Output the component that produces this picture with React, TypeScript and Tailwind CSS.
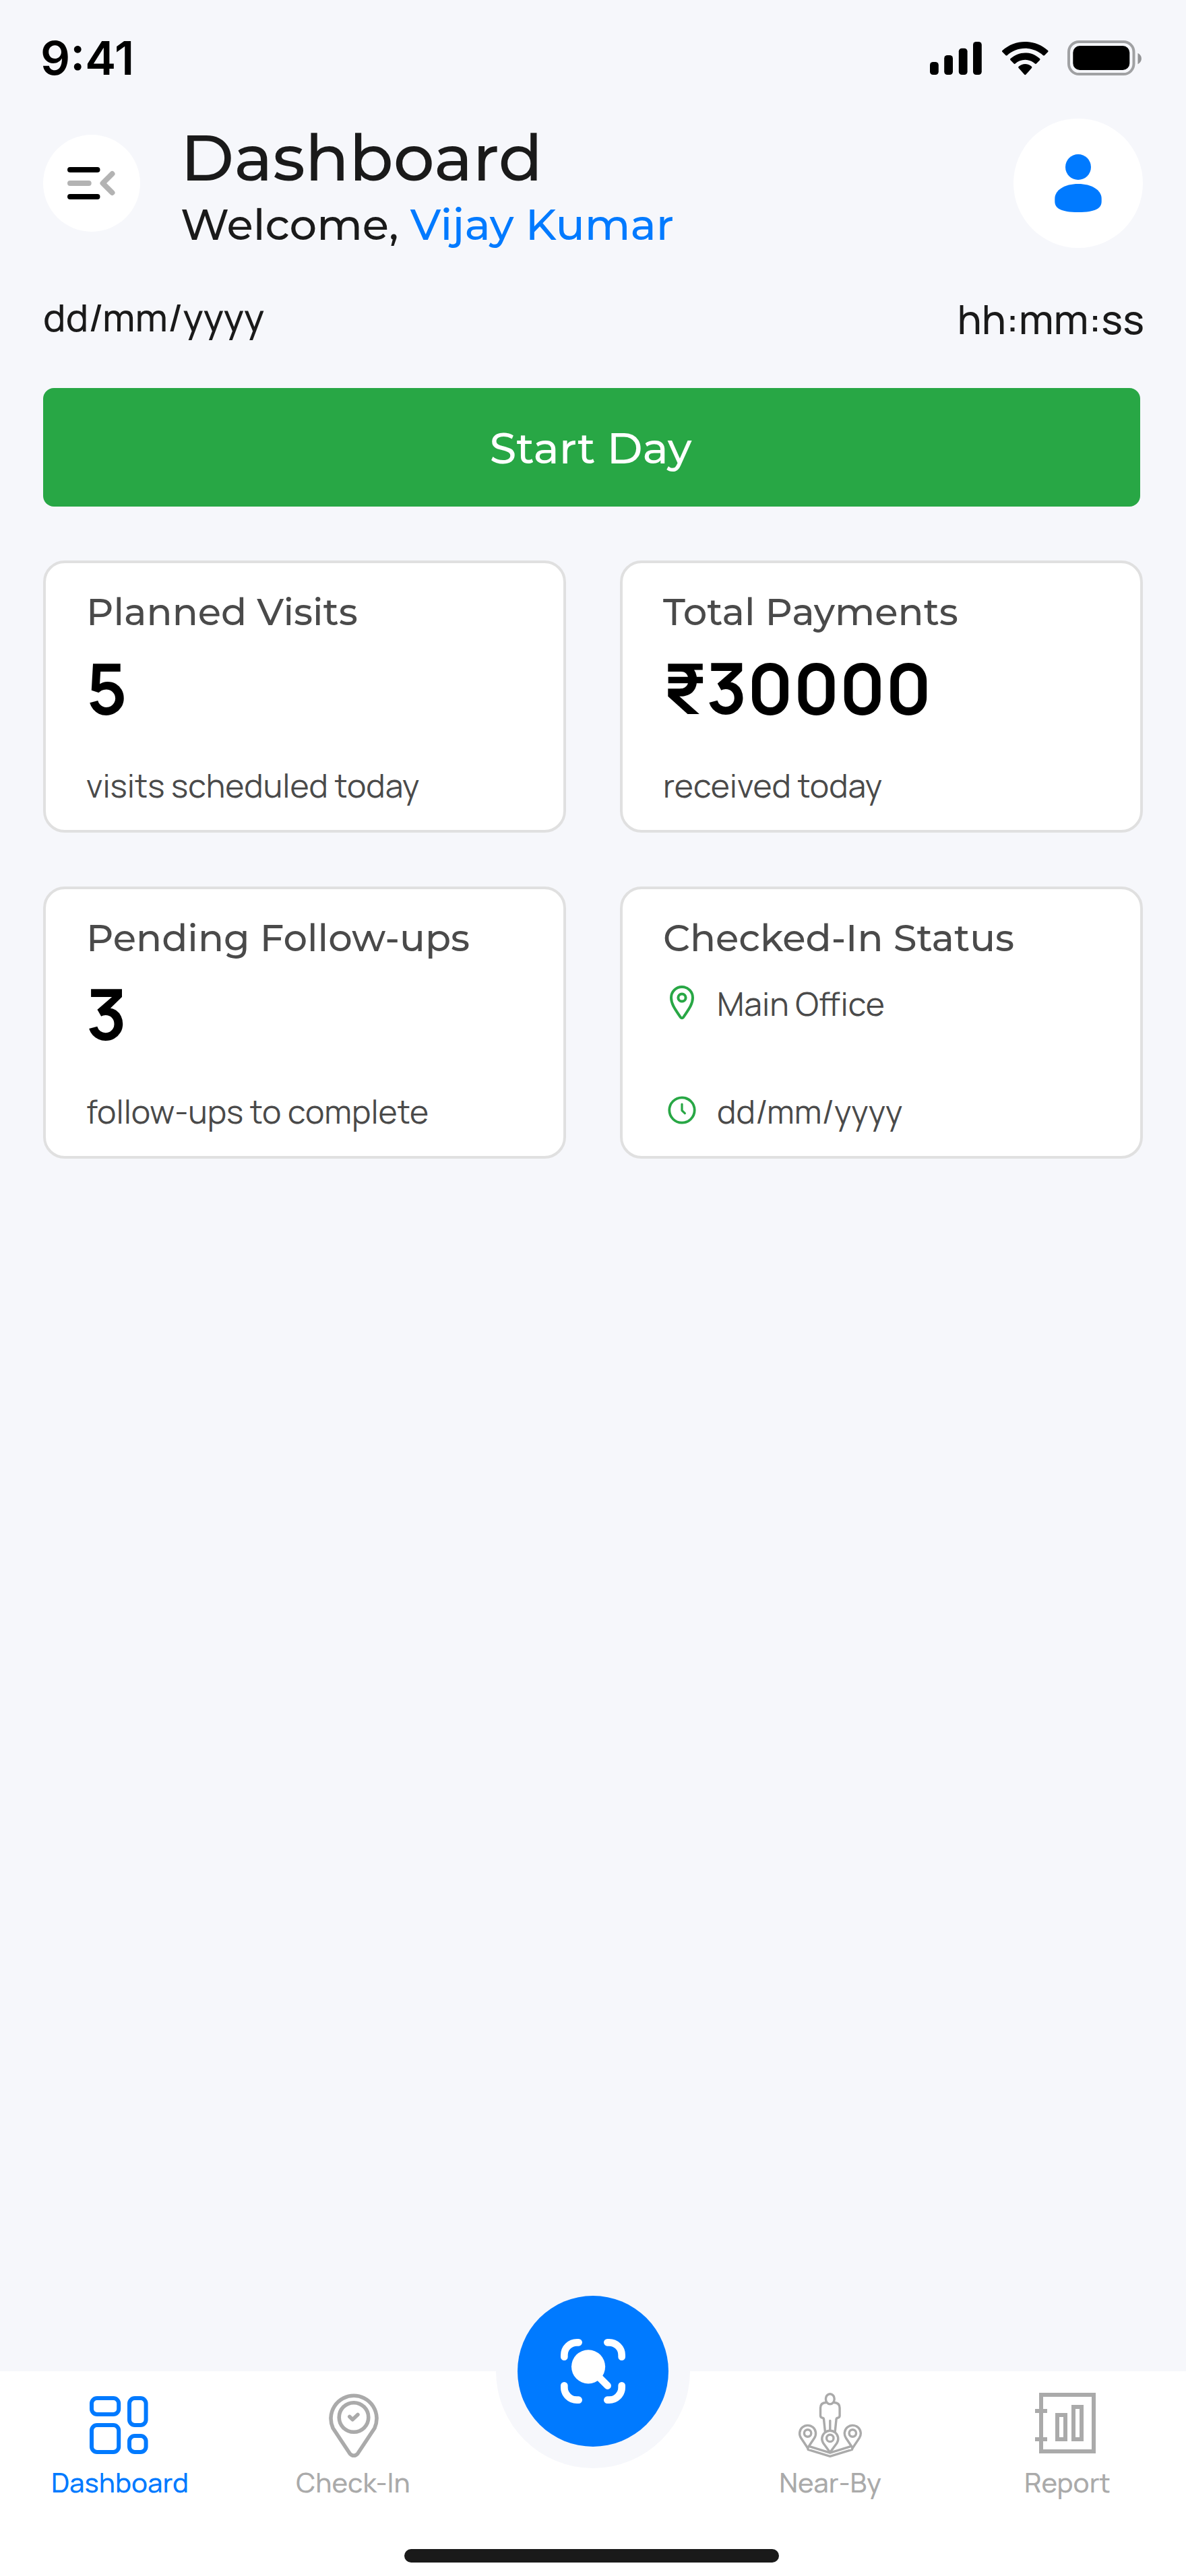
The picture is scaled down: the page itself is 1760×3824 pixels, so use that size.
import React, { type ReactNode } from "react";

function SignalIcon() {
  return (
    <svg className="h-[50px] w-[78px]" viewBox="0 0 78 50" fill="#000">
      <rect x="0" y="30" width="12.8" height="19" rx="4.6" />
      <rect x="21.2" y="20" width="12.8" height="29" rx="4.6" />
      <rect x="42.8" y="9.7" width="12.8" height="39.3" rx="4.6" />
      <rect x="64" y="0" width="12.8" height="49" rx="4.6" />
    </svg>
  );
}

function WifiIcon() {
  return (
    <svg className="h-[50px] w-[69px]" viewBox="0 0 17.25 12.5" fill="#000">
      <path d="M8.5713 2.46628C11.0584 2.46639 13.4504 3.38847 15.2529 5.04195C15.3887 5.1696 15.6056 5.16799 15.7393 5.03834L17.0368 3.77487C17.1045 3.70911 17.1422 3.62004 17.1417 3.52735C17.1411 3.43467 17.1023 3.34603 17.0338 3.28104C12.3028 -1.09368 4.83907 -1.09368 0.108056 3.28104C0.0395 3.34598 0.0006 3.4346 0 3.52728C-0.0006 3.61996 0.037 3.70906 0.1047 3.77487L1.40255 5.03834C1.53615 5.16819 1.75327 5.1698 1.88893 5.04195C3.69167 3.38836 6.08395 2.46628 8.5713 2.46628Z" />
      <path d="M8.56795 6.68656C9.92527 6.68647 11.2341 7.19821 12.2403 8.12234C12.3763 8.25334 12.5907 8.2505 12.7234 8.11594L14.0106 6.79663C14.0784 6.72742 14.116 6.63355 14.115 6.536C14.114 6.43844 14.0746 6.34536 14.0054 6.27757C10.9416 3.38672 6.19688 3.38672 3.13305 6.27757C3.06384 6.34536 3.02435 6.43849 3.02345 6.53607C3.02254 6.63366 3.06028 6.72752 3.12822 6.79663L4.41513 8.11594C4.54778 8.2505 4.76215 8.25334 4.89823 8.12234C5.90368 7.19882 7.21152 6.68713 8.56795 6.68656Z" />
      <path d="M11.0924 9.48011C11.0943 9.58546 11.0572 9.68703 10.9899 9.76084L8.81327 12.2156C8.74946 12.2877 8.66247 12.3283 8.5717 12.3283C8.48094 12.3283 8.39394 12.2877 8.33013 12.2156L6.15314 9.76084C6.08585 9.68697 6.04886 9.58537 6.05089 9.48002C6.05293 9.37467 6.09383 9.27493 6.16393 9.20435C7.55407 7.90005 9.58933 7.90005 10.9795 9.20435C11.0495 9.27499 11.0904 9.37476 11.0924 9.48011Z" />
    </svg>
  );
}

function BatteryIcon() {
  return (
    <svg className="h-[52px] w-[112px]" viewBox="0 0 112 52">
      <rect x="2" y="2" width="96.5" height="48" rx="15.2" fill="none" stroke="#000" strokeOpacity="0.35" strokeWidth="4" />
      <path d="M104.5 19v16.2c3.3-1.4 5.4-4.6 5.4-8.1s-2.1-6.7-5.4-8.1Z" fill="#000" fillOpacity="0.4" />
      <rect x="8.3" y="8" width="84" height="36" rx="10" fill="#000" />
    </svg>
  );
}

function MenuIcon() {
  return (
    <svg className="size-20" viewBox="0 0 80 80" fill="none" strokeWidth="8" strokeLinecap="round" strokeLinejoin="round">
      <path d="M8 20h40.5M8 60h40.5" stroke="#000" />
      <path d="M8 40h27.7M70.5 26 56.5 40l14 14" stroke="#B3B3B3" />
    </svg>
  );
}

function UserIcon() {
  return (
    <svg className="size-24" viewBox="0 0 96 96" fill="#007AFF">
      <circle cx="48" cy="24" r="19" />
      <path d="M13.3 71C13.3 58 28 49 48 49s34.7 9 34.7 22v4C82.7 85 74 91 48 91S13.3 85 13.3 75Z" />
    </svg>
  );
}

function PinIcon() {
  return (
    <svg className="size-14 shrink-0" viewBox="0 0 56 56" fill="none" stroke="#28A745" strokeWidth="4">
      <path d="M12 19a16 16 0 0 1 32 0c0 11-8.5 20.5-13.8 29q-2.2 2.6-4.4 0C20.5 39.5 12 30 12 19Z" />
      <circle cx="28" cy="19" r="5.6" />
    </svg>
  );
}

function ClockIcon() {
  return (
    <svg className="size-14 shrink-0" viewBox="0 0 56 56" fill="none" stroke="#28A745" strokeLinecap="round" strokeLinejoin="round">
      <circle cx="28" cy="26" r="18.7" strokeWidth="3.8" />
      <path d="M28 17v9.500l4.300 4.200" strokeWidth="3.200" />
    </svg>
  );
}

function DashboardIcon() {
  return (
    <svg className="size-24" viewBox="0 0 96 96" fill="none" stroke="currentColor" strokeWidth="6">
      <rect x="8" y="8" width="40.2" height="24" rx="8" />
      <rect x="8" y="48" width="40.2" height="40" rx="8" />
      <rect x="64" y="8" width="24.6" height="40" rx="8" />
      <rect x="64" y="64" width="24.6" height="24" rx="8" />
    </svg>
  );
}

function CheckInIcon() {
  return (
    <svg className="size-24" viewBox="0 0 96 96" fill="none" stroke="currentColor" strokeWidth="5.6" strokeLinecap="round" strokeLinejoin="round">
      <path d="M18.1 52.5A34 34 0 1 1 79.9 52.5L54.5 90.8Q49 96 43.5 90.8Z" />
      <circle cx="49" cy="36.5" r="21.8" />
      <path d="m42.8 35.5 4.4 4.2 7.7-7.2" />
    </svg>
  );
}

function NearByIcon() {
  return (
    <svg className="size-24" viewBox="0 0 96 96" fill="none" stroke="currentColor" strokeWidth="3.4" strokeLinecap="round" strokeLinejoin="round">
      <ellipse cx="47.8" cy="9.3" rx="6.4" ry="7.6" />
      <path d="M42 14.5C36 14.7 33.5 18 33.5 22.5V34c0 2.5 1.5 3 3 3.3 1.8.3 2 1.2 2.1 2.7l1.8 17.5" />
      <path d="M53.6 14.5c6 .2 8.5 3.5 8.5 8V34c0 2.5-1.5 3-3 3.3-1.8.3-2 1.2-2.1 2.7l-1.8 17.5" />
      <path d="M47.8 41.5v14" />
      <path d="M47.8 88.5 37.7 74.8A12 12 0 1 1 57.9 74.8Z" />
      <circle cx="47.8" cy="67.4" r="5.2" />
      <path d="M14.6 82 4.6 67A12 12 0 1 1 24.6 67Z" />
      <circle cx="14.6" cy="60" r="5.2" />
      <path d="M81.3 82 71.3 67A12 12 0 1 1 91.3 67Z" />
      <circle cx="81.3" cy="60" r="5.2" />
      <path d="m18 79.8 29.8 9.4 29.8-9.4M14.3 81l1 3.4 32.5 9.9 32.5-9.9 1-3.4" />
    </svg>
  );
}

function ReportIcon() {
  return (
    <svg className="size-24" viewBox="0 0 96 96" fill="none" stroke="currentColor" strokeWidth="6">
      <path d="M9 3h78v84H9ZM0 27h18M0 69h18M33 33h12v36H33ZM57 21h12v48H57Z" />
    </svg>
  );
}

function ScanIcon() {
  return (
    <svg className="size-24" viewBox="0 0 18 18" fill="none" stroke="#fff" strokeWidth="2" strokeLinecap="round">
      <path d="M1 5V4.5A3.5 3.5 0 0 1 4.5 1H5M13 1h.5A3.5 3.5 0 0 1 17 4.5V5M1 13v.5A3.5 3.5 0 0 0 4.5 17H5M13 17h.5A3.5 3.5 0 0 0 17 13.5V13" />
      <circle cx="7.7" cy="7.75" r="4.7" fill="#fff" stroke="none" />
      <path d="m10 10 3.05 3.05" />
    </svg>
  );
}

function Card({ title, children }: { title: string; children: ReactNode }) {
  return (
    <section className="flex h-[404px] flex-col rounded-[32px] border-4 border-[#E0E0E0] bg-white px-[60px] pt-[38px]">
      <h2 className="font-[Montserrat,Inter,sans-serif] text-[56px] leading-[68px] font-medium whitespace-nowrap text-[#4A4A4A]">
        {title}
      </h2>
      {children}
    </section>
  );
}

function StatCard({ title, value, note }: { title: string; value: string; note: string }) {
  return (
    <Card title={title}>
      <p className="mt-[7px] text-[104px] leading-[142px] font-bold text-black">{value}</p>
      <p className="mt-[42px] text-5xl leading-[66px] text-[#4A4A4A]">{note}</p>
    </Card>
  );
}

function NavItem({ icon, label, active, className = "" }: { icon: ReactNode; label: string; active?: boolean; className?: string }) {
  return (
    <a className={`flex flex-col items-center pt-8 ${active ? "text-[#007AFF]" : "text-[#AAAAAA]"} ${className}`}>
      {icon}
      <span className={`mt-[9px] text-[40px] leading-[55px] font-medium ${active ? "pl-1" : ""}`}>{label}</span>
    </a>
  );
}

export default function App() {
  return (
    <div className="flex h-[3824px] w-[1760px] flex-col bg-[#F6F7FB] font-[Manrope,Inter,sans-serif] text-[#1A1A1A]">
      <div className="flex h-44 items-start justify-between pt-[60px] pr-16 pl-[60px]">
        <span className="mt-[-15px] font-[Inter,sans-serif] text-[69px] leading-[82px] font-semibold text-black">9:41</span>
        <div className="flex items-start">
          <div className="mt-0.5 mr-[29px]"><SignalIcon /></div>
          <div className="mt-0.5 mr-[28px]"><WifiIcon /></div>
          <BatteryIcon />
        </div>
      </div>

      <header className="flex h-48 items-center px-16">
        <button className="flex size-36 items-center justify-center rounded-full bg-white">
          <MenuIcon />
        </button>
        <div className="mt-[3px] ml-[60px] flex flex-col gap-0.5 font-[Montserrat,Inter,sans-serif] font-medium whitespace-nowrap">
          <h1 className="text-8xl leading-[117px]">Dashboard</h1>
          <p className="text-[64px] leading-[78px]">
            Welcome, <span className="text-[#007AFF]">Vijay Kumar</span>
          </p>
        </div>
        <div className="ml-auto flex size-48 items-center justify-center rounded-full bg-white">
          <UserIcon />
        </div>
      </header>

      <main className="flex flex-1 flex-col px-16 pt-16">
        <div className="-mr-0.5 flex items-start justify-between font-medium">
          <span className="text-[56px] leading-[77px]">dd/mm/yyyy</span>
          <span className="text-[60px] leading-[82px]">hh:mm:ss</span>
        </div>
        <button className="mt-[62px] flex h-44 w-[1628px] items-center justify-center rounded-2xl bg-[#28A745] pt-0.5 pr-[3px] font-[Montserrat,Inter,sans-serif] text-[64px] leading-[80px] font-medium text-white">
          Start Day
        </button>
        <div className="mt-20 grid grid-cols-2 gap-20">
          <StatCard title="Planned Visits" value="5" note="visits scheduled today" />
          <StatCard title="Total Payments" value="₹30000" note="received today" />
          <StatCard title="Pending Follow-ups" value="3" note="follow-ups to complete" />
          <Card title="Checked-In Status">
            <div className="mt-[31px] flex items-center gap-6 text-5xl leading-[66px] text-[#4A4A4A]">
              <PinIcon />
              <span>Main Office</span>
            </div>
            <div className="mt-[94px] flex items-center gap-6 text-5xl leading-[66px] text-[#4A4A4A]">
              <ClockIcon />
              <span>dd/mm/yyyy</span>
            </div>
          </Card>
        </div>
      </main>

      <nav className="relative flex h-[304px] flex-col items-center justify-between bg-white pb-5">
        <div className="absolute -top-36 left-1/2 flex size-72 -translate-x-1/2 items-center justify-center rounded-full bg-[#F6F7FB]">
          <button className="flex size-56 items-center justify-center rounded-full bg-[#007AFF]">
            <ScanIcon />
          </button>
        </div>
        <div className="grid w-full grid-cols-5">
          <NavItem icon={<DashboardIcon />} label="Dashboard" active />
          <NavItem icon={<CheckInIcon />} label="Check-In" className="pr-2" />
          <NavItem icon={<NearByIcon />} label="Near-By" className="col-start-4" />
          <NavItem icon={<ReportIcon />} label="Report" />
        </div>
        <div className="mr-1 h-5 w-[556px] rounded-[10px] bg-[#1A1A1A]" />
      </nav>
    </div>
  );
}
